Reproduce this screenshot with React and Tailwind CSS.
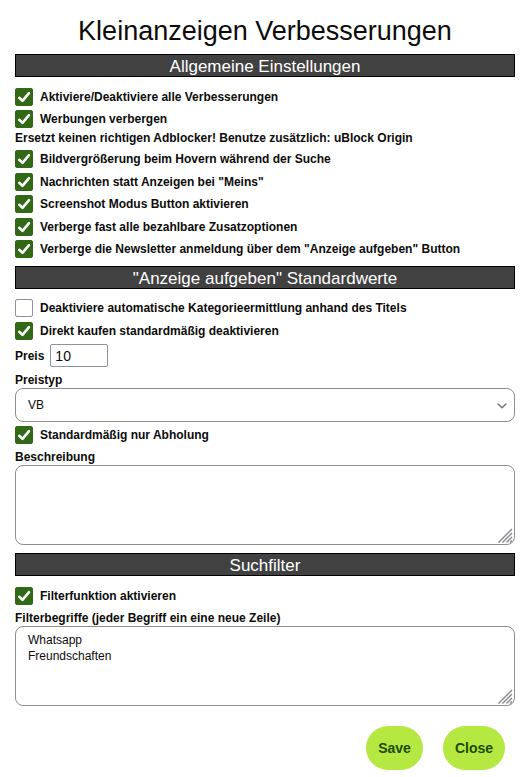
import { useId } from "react";

function SectionHeading({ children }) {
  return (
    <h2 className="h-[23px] border border-black bg-[#414141] text-center text-[17px] leading-6 font-normal text-white">
      {children}
    </h2>
  );
}

function CheckRow({ label, defaultChecked = true }) {
  const id = useId();
  return (
    <div className="flex h-[18px] items-center">
      <span className="relative flex h-[18px] w-[18px] shrink-0">
        <input
          id={id}
          type="checkbox"
          defaultChecked={defaultChecked}
          className="peer h-[18px] w-[18px] appearance-none rounded-xs border border-[#8f8f9d] bg-white checked:border-[#326916] checked:bg-[#326916]"
        />
        <svg
          viewBox="0 0 18 18"
          className="pointer-events-none absolute inset-0 hidden h-[18px] w-[18px] peer-checked:block"
          fill="none"
          stroke="white"
          strokeWidth="2.6"
          strokeLinecap="round"
          strokeLinejoin="round"
          aria-hidden="true"
        >
          <path d="M4.3 9.8 L7.5 12.9 L14 5.2" />
        </svg>
      </span>
      <label htmlFor={id} className="pl-[7px]">
        {label}
      </label>
    </div>
  );
}

function TextArea({ label, defaultValue = "" }) {
  const id = useId();
  return (
    <div>
      <label htmlFor={id} className="block">
        {label}
      </label>
      <div className="relative">
        <textarea
          id={id}
          defaultValue={defaultValue}
          className="block h-20 w-full resize-none rounded-lg border border-[#8f8f86] bg-white px-3 py-[5px] font-normal leading-4"
        />
        <svg
          viewBox="0 0 15 15"
          className="pointer-events-none absolute right-[2px] bottom-[2px] h-[15px] w-[15px]"
          fill="none"
          stroke="#85858c"
          strokeWidth="1.3"
          aria-hidden="true"
        >
          <path d="M0.5 14.5 L14 1 M4.5 14.5 L14 5 M8.5 14.5 L14 9 M12 14.5 L14 12.5" />
        </svg>
      </div>
    </div>
  );
}

function PillButton({ children }) {
  return (
    <button
      type="button"
      className="h-11 rounded-full bg-[#b5e941] px-3 text-sm font-bold text-[#1d4b00]"
    >
      {children}
    </button>
  );
}

export default function App() {
  return (
    <form className="bg-white pt-3 pr-2 pb-[7px] pl-[15px] font-['Liberation_Sans',Arial,sans-serif] text-xs leading-4 font-bold text-[#0c0c0b]">
      <h1 className="pb-1 text-center text-[27px] leading-[38px] font-normal">
        Kleinanzeigen Verbesserungen
      </h1>

      <SectionHeading>Allgemeine Einstellungen</SectionHeading>
      <div className="flex flex-col gap-1 pt-[11px]">
        <CheckRow label="Aktiviere/Deaktiviere alle Verbesserungen" />
        <CheckRow label="Werbungen verbergen" />
      </div>
      <p className="pt-[2px] pb-1">
        Ersetzt keinen richtigen Adblocker! Benutze zusätzlich: uBlock Origin
      </p>
      <div className="flex min-h-[108px] flex-col justify-between">
        <CheckRow label="Bildvergrößerung beim Hovern während der Suche" />
        <CheckRow label={'Nachrichten statt Anzeigen bei "Meins"'} />
        <CheckRow label="Screenshot Modus Button aktivieren" />
        <CheckRow label="Verberge fast alle bezahlbare Zusatzoptionen" />
        <CheckRow label={'Verberge die Newsletter anmeldung über dem "Anzeige aufgeben" Button'} />
      </div>

      <div className="pt-2">
        <SectionHeading>"Anzeige aufgeben" Standardwerte</SectionHeading>
      </div>
      <div className="flex flex-col gap-[5px] pt-[10px]">
        <CheckRow
          label="Deaktiviere automatische Kategorieermittlung anhand des Titels"
          defaultChecked={false}
        />
        <CheckRow label="Direkt kaufen standardmäßig deaktivieren" />
      </div>
      <div className="flex items-center gap-[6px] pt-1">
        <label htmlFor="price">Preis</label>
        <input
          id="price"
          type="text"
          inputMode="numeric"
          defaultValue="10"
          className="h-[23px] w-[58px] rounded-xs border border-[#8f8f9d] px-1 text-sm font-normal"
        />
      </div>
      <div className="pt-[5px] pb-1">
        <label htmlFor="price-type" className="block">
          Preistyp
        </label>
        <div className="relative">
          <select
            id="price-type"
            defaultValue="VB"
            className="block h-[34px] w-full appearance-none rounded-lg border border-[#8f8f86] bg-white px-3 font-normal"
          >
            <option>VB</option>
            <option>Festpreis</option>
            <option>Zu verschenken</option>
          </select>
          <svg
            viewBox="0 0 10 6"
            className="pointer-events-none absolute top-[15px] right-2 h-[6px] w-[10px]"
            fill="none"
            stroke="#75757d"
            strokeWidth="1.5"
            strokeLinecap="round"
            strokeLinejoin="round"
            aria-hidden="true"
          >
            <path d="M1 1 L5 4.8 L9 1" />
          </svg>
        </div>
      </div>
      <CheckRow label="Standardmäßig nur Abholung" />
      <div className="pt-[5px] pb-2">
        <TextArea label="Beschreibung" />
      </div>

      <SectionHeading>Suchfilter</SectionHeading>
      <div className="pt-[11px] pb-[5px]">
        <CheckRow label="Filterfunktion aktivieren" />
      </div>
      <TextArea
        label="Filterbegriffe (jeder Begriff ein eine neue Zeile)"
        defaultValue={"Whatsapp\nFreundschaften"}
      />

      <div className="flex justify-end gap-5 pt-5 pr-[10px]">
        <PillButton>Save</PillButton>
        <PillButton>Close</PillButton>
      </div>
    </form>
  );
}
